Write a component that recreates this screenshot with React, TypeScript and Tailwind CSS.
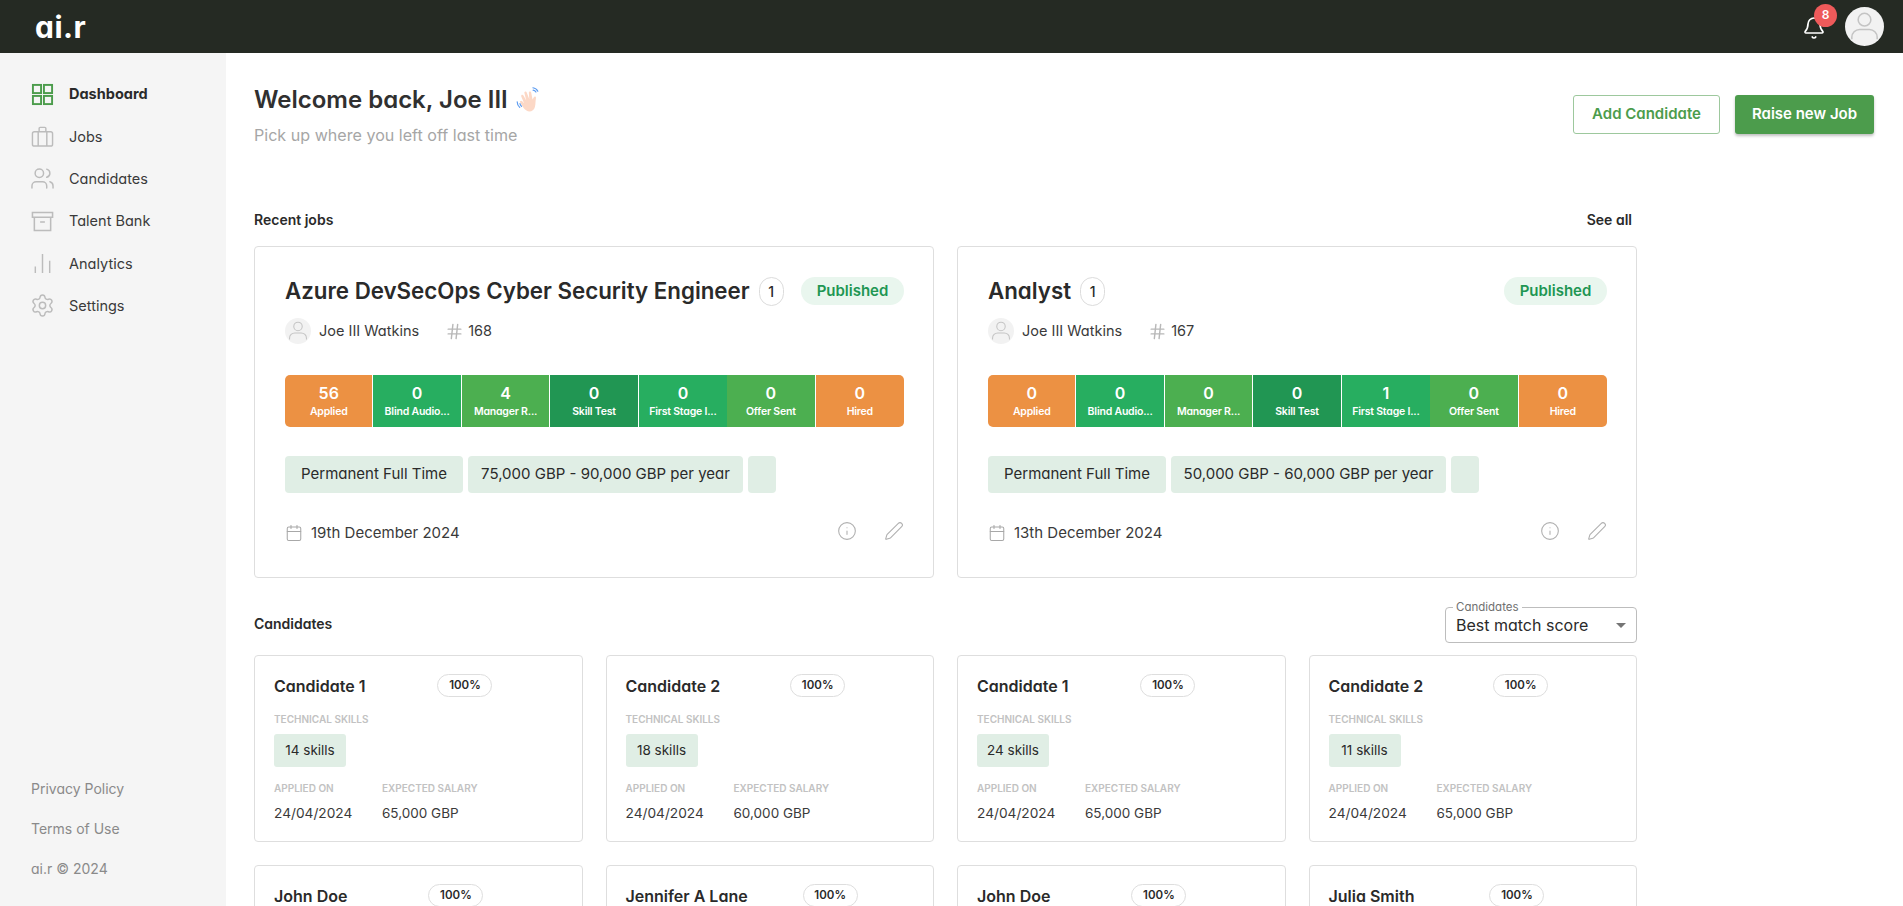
import { Bell, Calendar, Hash, Info, Pen, Settings, Users } from 'lucide-react'
import type { ComponentType } from 'react'

type IconProps = { className?: string }

function GridIcon({ className }: IconProps) {
  return (
    <svg viewBox="0 0 24 24" className={className} fill="none" stroke="currentColor" strokeWidth="2">
      <rect x="2" y="2" width="8.500" height="8.500" />
      <rect x="13.500" y="2" width="8.500" height="8.500" />
      <rect x="2" y="13.500" width="8.500" height="8.500" />
      <rect x="13.500" y="13.500" width="8.500" height="8.500" />
    </svg>
  )
}

function JobsIcon({ className }: IconProps) {
  return (
    <svg viewBox="0 0 24 24" className={className} fill="none" stroke="currentColor" strokeWidth="1.500">
      <rect x="1.500" y="7" width="21" height="15" rx="2" />
      <path d="M7.500 22V7M16.500 22V7M8.500 7V3.500a1 1 0 0 1 1-1h5a1 1 0 0 1 1 1V7" />
    </svg>
  )
}

function PeopleIcon({ className }: IconProps) {
  return <Users className={`scale-110 ${className}`} strokeWidth={1.400} />
}

function ArchiveIcon({ className }: IconProps) {
  return (
    <svg viewBox="0 0 24 24" className={className} fill="none" stroke="currentColor" strokeWidth="1.600">
      <path d="M1.500 2.500h21v5h-21zM3.500 7.500v14h17v-14M9.500 12.500h5" />
    </svg>
  )
}

function BarsIcon({ className }: IconProps) {
  return (
    <svg viewBox="0 0 24 24" className={className} fill="none" stroke="currentColor" strokeWidth="1.500">
      <path d="M4.500 22v-7M12 22V2M19.500 22V9" />
    </svg>
  )
}

function GearIcon({ className }: IconProps) {
  return <Settings className={`scale-110 ${className}`} strokeWidth={1.400} />
}

const nav: { label: string; icon: ComponentType<IconProps>; active?: boolean }[] = [
  { label: 'Dashboard', icon: GridIcon, active: true },
  { label: 'Jobs', icon: JobsIcon },
  { label: 'Candidates', icon: PeopleIcon },
  { label: 'Talent Bank', icon: ArchiveIcon },
  { label: 'Analytics', icon: BarsIcon },
  { label: 'Settings', icon: GearIcon },
]

const stageLabels = ['Applied', 'Blind Audio...', 'Manager R...', 'Skill Test', 'First Stage I...', 'Offer Sent', 'Hired']
const stageColors = ['bg-[#ec9143]', 'bg-[#27ae60]', 'bg-[#4caf50]', 'bg-[#219653]', 'bg-[#27ae60]', 'bg-[#4caf50]', 'bg-[#ec9143]']

const jobs = [
  { title: 'Azure DevSecOps Cyber Security Engineer', id: 168, counts: [56, 0, 4, 0, 0, 0, 0], salary: '75,000 GBP - 90,000 GBP per year', date: '19th December 2024' },
  { title: 'Analyst', id: 167, counts: [0, 0, 0, 0, 1, 0, 0], salary: '50,000 GBP - 60,000 GBP per year', date: '13th December 2024' },
]

const candidates = [
  { name: 'Candidate 1', skills: 14, salary: '65,000 GBP', pill: 'ml-[72px]' },
  { name: 'Candidate 2', skills: 18, salary: '60,000 GBP', pill: 'ml-[70px]' },
  { name: 'Candidate 1', skills: 24, salary: '65,000 GBP', pill: 'ml-[72px]' },
  { name: 'Candidate 2', skills: 11, salary: '65,000 GBP', pill: 'ml-[70px]' },
  { name: 'John Doe', skills: 14, salary: '65,000 GBP', pill: 'ml-[81px]' },
  { name: 'Jennifer A Lane', skills: 14, salary: '65,000 GBP', pill: 'ml-[55px]' },
  { name: 'John Doe', skills: 14, salary: '65,000 GBP', pill: 'ml-[81px]' },
  { name: 'Julia Smith', skills: 14, salary: '65,000 GBP', pill: 'ml-[75px]' },
]

function Avatar({ className }: { className: string }) {
  return (
    <svg viewBox="0 0 40 40" className={className}>
      <circle cx="20" cy="20" r="20" fill="#f2f2f2" />
      <circle cx="20" cy="13" r="6.500" fill="none" stroke="#c4c4c4" strokeWidth="1.600" />
      <path d="M7 33v-2a8 8 0 0 1 8-8h10a8 8 0 0 1 8 8v2" fill="none" stroke="#c4c4c4" strokeWidth="1.600" />
    </svg>
  )
}

function WaveHand() {
  return (
    <svg viewBox="0 0 24 24" className="ml-[8px] h-[28px] w-[28px]">
      <path d="M9 21c-2-1-4-4-5.500-7-.6-1.200 1-2 1.800-1l1.700 2-2.500-6c-.5-1.300 1.200-2 1.900-.9l2.400 4.400-1.600-6.500c-.3-1.300 1.500-1.800 2-.5l2.200 5.900-.4-5.600c-.1-1.400 1.800-1.500 2-.2l1.200 6 1.100-2c.7-1.100 2.100-.5 1.800.8-.5 2.400-.2 5-.9 7.600-.9 3.500-4.600 4.800-7.200 3z" fill="#fcd8c6" />
      <path d="M1 13.500c0 2 1 3.700 2.200 4.800M3.400 15c.1 1 .6 1.800 1.300 2.400M14.500 1.500c1.800.2 3.400 1.300 4.200 3M14.700 3.600c1 .1 1.900.7 2.400 1.600" fill="none" stroke="#5b9bf0" strokeWidth="1" strokeLinecap="round" />
    </svg>
  )
}

function JobCard({ job }: { job: (typeof jobs)[number] }) {
  return (
    <div className="flex h-[332px] flex-col rounded-[4px] border border-[#dedede] bg-white pt-[29px] pr-[29px] pl-[30px]">
      <div className="flex h-[30px] items-center justify-between">
        <div className="flex items-center gap-[9px]">
          <h2 className="text-[22.300px] font-semibold whitespace-nowrap text-[#2a2a2a]">{job.title}</h2>
          <span className="grid h-[29px] w-[25px] place-items-center rounded-full border border-[#dcdcdc] text-[14px] font-medium text-[#2a2a2a]">1</span>
        </div>
        <span className="grid h-[28px] w-[103px] place-items-center rounded-full bg-[#e9f6ee] text-[15px] font-semibold text-[#219653]">Published</span>
      </div>
      <div className="mt-[12px] flex h-[26px] items-center text-[14.500px] text-[#3a3a3a]">
        <Avatar className="h-[26px] w-[26px]" />
        <span className="ml-[8px]">Joe III Watkins</span>
        <Hash size={19} strokeWidth={1.800} className="ml-[26px] text-[#b8b8b8]" />
        <span className="ml-[4px]">{job.id}</span>
      </div>
      <div className="mt-[31px] grid h-[52px] grid-cols-7 overflow-hidden rounded-[5px]">
        {job.counts.map((count, i) => (
          <div key={i} className={`flex flex-col items-center justify-center text-white ${stageColors[i]} ${i === 4 ? '' : 'border-r border-white last:border-r-0'}`}>
            <span className="text-[16px] leading-[22px] font-semibold">{count}</span>
            <span className="text-[10.500px] leading-[16px] font-semibold tracking-[-0.2px] whitespace-nowrap">{stageLabels[i]}</span>
          </div>
        ))}
      </div>
      <div className="mt-[29px] flex gap-[5px] text-[15px] text-[#2a2a2a]">
        <span className="flex h-[37px] w-[178px] items-center justify-center rounded-[4px] bg-[#e0eee5]">Permanent Full Time</span>
        <span className="flex h-[37px] w-[275px] items-center justify-center rounded-[4px] bg-[#e0eee5]">{job.salary}</span>
        <span className="h-[37px] w-[28px] rounded-[4px] bg-[#e0eee5]" />
      </div>
      <div className="mt-[29px] flex items-center justify-between">
        <div className="flex items-center gap-[8px] text-[15px] text-[#3a3a3a]">
          <Calendar size={18} strokeWidth={1.400} className="text-[#a8a8a8]" />
          {job.date}
        </div>
        <div className="flex -translate-y-[2px] items-center gap-[27px] text-[#b0b0b0]">
          <Info size={20} strokeWidth={1.300} />
          <Pen size={20} strokeWidth={1.300} />
        </div>
      </div>
    </div>
  )
}

function CandidateCard({ c }: { c: (typeof candidates)[number] }) {
  return (
    <div className="h-[187px] rounded-[4px] border border-[#dedede] bg-white px-[19px] pt-[18px]">
      <div className="flex h-[23px] items-center">
        <span className="text-[16px] font-semibold whitespace-nowrap text-[#2a2a2a]">{c.name}</span>
        <span className={`grid h-[23px] w-[55px] place-items-center rounded-full border border-[#dedede] text-[11.500px] font-semibold text-[#2a2a2a] ${c.pill}`}>100%</span>
      </div>
      <p className="mt-[15px] text-[10px] leading-[14px] font-semibold text-[#c2c2c2]">TECHNICAL SKILLS</p>
      <span className="mt-[8px] flex h-[33px] w-[72px] items-center justify-center rounded-[3px] bg-[#e0eee5] text-[13.500px] text-[#2a2a2a]">{c.skills} skills</span>
      <div className="mt-[14px] flex">
        <div className="w-[108px]">
          <p className="text-[10px] leading-[14px] font-semibold text-[#c2c2c2]">APPLIED ON</p>
          <p className="mt-[8px] text-[13.700px] leading-[20px] text-[#3a3a3a]">24/04/2024</p>
        </div>
        <div>
          <p className="text-[10px] leading-[14px] font-semibold text-[#c2c2c2]">EXPECTED SALARY</p>
          <p className="mt-[8px] text-[13.500px] leading-[20px] text-[#3a3a3a]">{c.salary}</p>
        </div>
      </div>
    </div>
  )
}

export default function App() {
  return (
    <div className="flex h-screen flex-col overflow-hidden bg-white font-['Inter','Liberation_Sans',sans-serif] [font-feature-settings:'cv11']">
      <header className="flex h-[53px] shrink-0 items-center justify-between bg-[#252a23] pr-[19px] pl-[35px]">
        <span className="text-[30px] leading-none font-bold tracking-[0.5px] text-white">ai.r</span>
        <div className="flex items-center gap-[19px]">
          <div className="relative translate-y-[1px]">
            <Bell size={24} strokeWidth={1.700} className="text-white" />
            <span className="absolute -top-[12px] left-[12px] grid h-[23px] w-[23px] place-items-center rounded-full bg-[#ee5a5a] text-[12px] font-semibold text-white">8</span>
          </div>
          <Avatar className="h-[39px] w-[39px]" />
        </div>
      </header>
      <div className="flex min-h-0 flex-1">
        <aside className="flex w-[226px] shrink-0 flex-col justify-between bg-[#f5f5f5] pt-[25px] pb-[27px] pl-[31px]">
          <nav className="flex flex-col gap-[10.400px]">
            {nav.map(({ label, icon: Icon, active }) => (
              <div key={label} className={`flex h-[32px] items-center text-[14.500px] ${active ? 'font-bold text-[#2a2a2a]' : 'text-[#3a3a3a]'}`}>
                <span className="flex w-[38px] items-center">
                  <Icon className={`h-[23px] w-[23px] ${active ? 'text-[#4c9c4c]' : 'text-[#bcbcbc]'}`} />
                </span>
                {label}
              </div>
            ))}
          </nav>
          <div className="flex flex-col gap-[20px] text-[14px] leading-[20px] text-[#8a8a8a]">
            <span>Privacy Policy</span>
            <span>Terms of Use</span>
            <span>ai.r © 2024</span>
          </div>
        </aside>
        <main className="min-w-0 flex-1 pt-[30px] pr-[29px] pl-[28px]">
          <div className="flex items-start justify-between">
            <div>
              <h1 className="flex h-[34px] items-center text-[24px] font-semibold text-[#303030]">Welcome back, Joe III<WaveHand /></h1>
              <p className="mt-[6px] text-[16.100px] leading-[24px] text-[#a6a6a6]">Pick up where you left off last time</p>
            </div>
            <div className="mt-[12px] flex gap-[15px] font-semibold">
              <button type="button" className="h-[39px] w-[147px] rounded-[3px] border border-[#9dc89d] text-[15px] text-[#4c9c4c]">Add Candidate</button>
              <button type="button" className="h-[39px] w-[139px] rounded-[3px] bg-[#4c9c4c] text-[15px] text-white shadow-[0_2px_3px_rgba(0,0,0,0.25)]">Raise new Job</button>
            </div>
          </div>
          <div className="w-[1383px]">
            <div className="mt-[62px] mb-[17px] flex h-[20px] items-center justify-between pr-[5px] text-[14px] font-semibold text-[#2a2a2a]">
              <span>Recent jobs</span>
              <span>See all</span>
            </div>
            <div className="grid grid-cols-2 gap-[23px]">
              {jobs.map((job) => (
                <JobCard key={job.id} job={job} />
              ))}
            </div>
            <div className="mt-[29px] flex h-[36px] items-center justify-between">
              <span className="mb-[3px] text-[14px] font-semibold text-[#2a2a2a]">Candidates</span>
              <div className="relative flex h-[36px] w-[192px] items-center justify-between rounded-[4px] border border-[#bdbdbd] pr-[10px] pl-[10px] text-[16px] text-[#2a2a2a]">
                <span className="absolute -top-[8px] left-[7px] bg-white px-[3px] text-[11.500px] leading-[14px] text-[#707070]">Candidates</span>
                <span>Best match score</span>
                <span className="h-0 w-0 border-x-[5px] border-t-[5px] border-x-transparent border-t-[#757575]" />
              </div>
            </div>
            <div className="mt-[12px] grid grid-cols-4 gap-[23px]">
              {candidates.map((c, i) => (
                <CandidateCard key={i} c={c} />
              ))}
            </div>
          </div>
        </main>
      </div>
    </div>
  )
}
